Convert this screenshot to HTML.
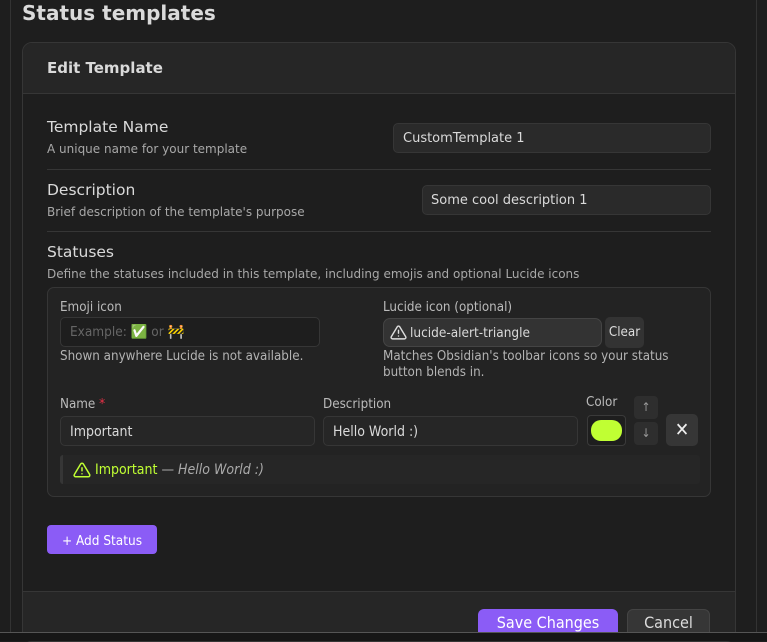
<!DOCTYPE html>
<html><head><meta charset="utf-8"><style>
*{box-sizing:border-box;margin:0;padding:0}
body{width:767px;height:641px;background:#1e1e1e;overflow:hidden;position:relative;font-family:"DejaVu Sans","Liberation Sans","Noto Sans CJK JP",sans-serif;color:#dadada}
.a{position:absolute}
.c{font-family:"DejaVu Sans Condensed","DejaVu Sans",sans-serif;font-stretch:condensed}
.inp{position:absolute;background:#2a2a2a;border:1px solid #363636;border-radius:5px;font-size:13px;color:#dadada;padding-left:9px;display:flex;align-items:center}
.hr{position:absolute;height:1px;background:#363636}
.sub{font-size:12px;color:#a8a8a8}
</style></head><body>
<div class="a" style="left:10px;top:0;width:1px;height:632px;background:#333"></div>
<div class="a" style="left:756px;top:0;width:1px;height:632px;background:#333"></div>
<div class="a" style="left:22px;top:1px;font-size:20px;font-weight:bold;color:#dadada">Status templates</div>

<div class="a" style="left:22px;top:42px;width:714px;height:600px;border:1px solid #363636;border-radius:10px;background:#1e1e1e;overflow:hidden">
 <div class="a" style="left:0;top:0;width:714px;height:51px;background:#262626;border-bottom:1px solid #363636"></div>
 <div class="a" style="left:24px;top:16px;font-size:15px;font-weight:bold">Edit Template</div>
 <div class="a" style="left:0;top:548px;width:714px;height:60px;background:#262626;border-top:1px solid #363636"></div>
</div>

<div class="a" style="left:47px;top:118px;font-size:15.5px">Template Name</div>
<div class="a sub" style="left:47px;top:142px">A unique name for your template</div>
<div class="inp" style="left:393px;top:123px;width:318px;height:30px">CustomTemplate 1</div>
<div class="hr" style="left:47px;top:169px;width:664px"></div>

<div class="a" style="left:47px;top:181px;font-size:15.5px">Description</div>
<div class="a sub" style="left:47px;top:205px">Brief description of the template's purpose</div>
<div class="inp" style="left:422px;top:185px;width:289px;height:30px;padding-left:8px;padding-top:1px">Some cool description 1</div>
<div class="hr" style="left:47px;top:231px;width:664px"></div>

<div class="a" style="left:47px;top:243px;font-size:15.5px">Statuses</div>
<div class="a sub" style="left:47px;top:267px">Define the statuses included in this template, including emojis and optional Lucide icons</div>

<div class="a c" style="left:47px;top:287px;width:664px;height:210px;border:1px solid #363636;border-radius:7px;background:#232323;font-size:13.3px">
 <div class="a" style="left:12px;top:12px;color:#bbb">Emoji icon</div>
 <div class="inp" style="left:12px;top:29px;width:260px;height:30px;background:#1e1e1e;color:#666;font-size:13.5px">Example: ✅ or 🚧</div>
 <div class="a" style="left:12px;top:61px;color:#b3b3b3">Shown anywhere Lucide is not available.</div>
 <div class="a" style="left:335px;top:12px;color:#bbb">Lucide icon (optional)</div>
 <div class="inp" style="left:335px;top:30px;width:219px;height:29px;background:#333;border-color:#444;padding-left:6px;border-radius:7px;font-size:13.5px"><svg width="17" height="17" viewBox="0 0 24 24" fill="none" stroke="#ddd" stroke-width="2" stroke-linecap="round" stroke-linejoin="round"><path d="M10.3 3.9 1.8 18a2 2 0 0 0 1.7 3h17a2 2 0 0 0 1.7-3L13.7 3.9a2 2 0 0 0-3.4 0z"/><path d="M12 9v4M12 17h.01"/></svg><span style="margin-left:3px">lucide-alert-triangle</span></div>
 <div class="a" style="left:557px;top:29px;width:39px;height:31px;background:#333;border-radius:5px;display:flex;align-items:center;justify-content:center;color:#ddd">Clear</div>
 <div class="a" style="left:335px;top:61px;color:#b3b3b3;line-height:16px;width:310px">Matches Obsidian's toolbar icons so your status button blends in.</div>
 <div class="a" style="left:12px;top:109px;color:#bbb">Name <span style="color:#e93147">*</span></div>
 <div class="inp" style="left:12px;top:128px;width:255px;height:30px;background:#262626;font-size:14px;padding-top:1px">Important</div>
 <div class="a" style="left:275px;top:109px;color:#bbb">Description</div>
 <div class="inp" style="left:275px;top:128px;width:255px;height:30px;background:#262626;font-size:14px;padding-top:1px">Hello World :)</div>
 <div class="a" style="left:538px;top:107px;color:#bbb">Color</div>
 <div class="a" style="left:539px;top:127px;width:39px;height:31px;border:1px solid #3a3a3a;border-radius:4px;background:#1e1e1e"><div style="margin:4px 3px;width:31px;height:21px;border-radius:10px;background:#c0ff33"></div></div>
 <div class="a" style="left:586px;top:108px;width:24px;height:23px;background:#2e2e2e;border-radius:4px;color:#999;font-size:12px;text-align:center;line-height:23px">↑</div>
 <div class="a" style="left:586px;top:134px;width:24px;height:23px;background:#2e2e2e;border-radius:4px;color:#999;font-size:12px;text-align:center;line-height:23px">↓</div>
 <div class="a" style="left:618px;top:126px;width:32px;height:32px;background:#363636;border-radius:5px;color:#eee;font-size:19px;font-weight:bold;text-align:center;line-height:32px">✕</div>
 <div class="a" style="left:12px;top:167px;width:640px;height:29px;background:#262626;border-left:3px solid #363636;border-radius:3px;display:flex;align-items:center;padding-left:10px;font-size:14px">
  <svg width="18" height="18" viewBox="0 0 24 24" fill="none" stroke="#c0ff33" stroke-width="2" stroke-linecap="round" stroke-linejoin="round"><path d="M10.3 3.9 1.8 18a2 2 0 0 0 1.7 3h17a2 2 0 0 0 1.7-3L13.7 3.9a2 2 0 0 0-3.4 0z"/><path d="M12 9v4M12 17h.01"/></svg>
  <span style="color:#c0ff33;margin-left:4px">Important</span><span style="color:#aaa;margin-left:4px">— <i>Hello World :)</i></span>
 </div>
</div>

<div class="a c" style="left:47px;top:525px;width:110px;height:29px;background:#8b5cf6;border-radius:4px;color:#fff;font-size:13.5px;display:flex;align-items:center;justify-content:center;padding-top:2px">+ Add Status</div>
<div class="a c" style="left:478px;top:609px;width:140px;height:30px;background:#8b5cf6;border-radius:6px;color:#fff;font-size:16px;text-align:center;line-height:28px">Save Changes</div>
<div class="a c" style="left:627px;top:609px;width:83px;height:30px;background:#363636;border:1px solid #444;border-radius:6px;color:#ddd;font-size:16px;text-align:center;line-height:26px">Cancel</div>
<div class="a" style="left:0;top:632px;width:767px;height:9px;background:#161616;border-top:1px solid #555"></div>
</body></html>
